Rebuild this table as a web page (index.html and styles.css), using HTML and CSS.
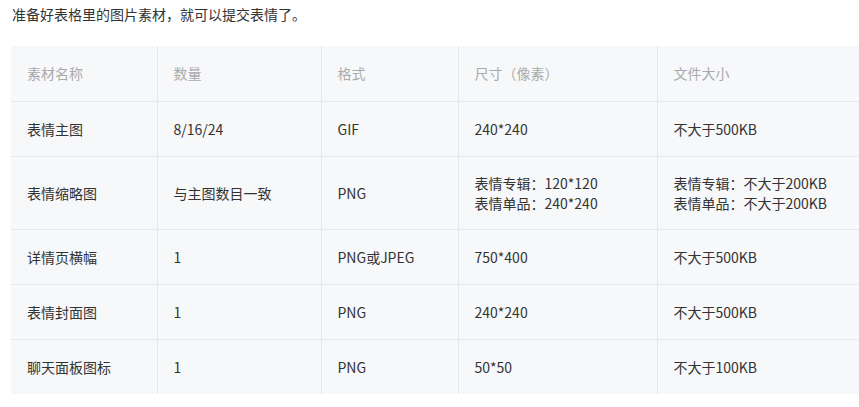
FILE: index.html
```html
<!DOCTYPE html>
<html lang="zh-CN">
<head>
<meta charset="utf-8">
<link rel="stylesheet" href="styles.css">
</head>
<body>
<p class="intro">准备好表格里的图片素材，就可以提交表情了。</p>
<div class="wrap">
<table class="spec">
  <colgroup>
    <col class="c1"><col class="c2"><col class="c3"><col class="c4"><col class="c5">
  </colgroup>
  <thead>
    <tr class="row-h"><th>素材名称</th><th>数量</th><th>格式</th><th>尺寸（像素）</th><th>文件大小</th></tr>
  </thead>
  <tbody>
    <tr class="row"><td>表情主图</td><td>8/16/24</td><td>GIF</td><td>240*240</td><td>不大于500KB</td></tr>
    <tr class="row-tall"><td>表情缩略图</td><td>与主图数目一致</td><td>PNG</td><td>表情专辑：120*120<br>表情单品：240*240</td><td>表情专辑：不大于200KB<br>表情单品：不大于200KB</td></tr>
    <tr class="row"><td>详情页横幅</td><td>1</td><td>PNG或JPEG</td><td>750*400</td><td>不大于500KB</td></tr>
    <tr class="row"><td>表情封面图</td><td>1</td><td>PNG</td><td>240*240</td><td>不大于500KB</td></tr>
    <tr class="row"><td>聊天面板图标</td><td>1</td><td>PNG</td><td>50*50</td><td>不大于100KB</td></tr>
  </tbody>
</table>
</div>
</body>
</html>
```
FILE: styles.css
```css
html, body {
  margin: 0;
  padding: 0;
  background: #fff;
  overflow: hidden;
}
body {
  font-family: "Noto Sans CJK SC", "Noto Sans", sans-serif;
  font-size: 14px;
  color: #333;
}
.intro {
  margin: 0;
  padding: 4px 0 0 12px;
  height: 46px;
  box-sizing: border-box;
  line-height: 20px;
  color: #333;
}
.wrap {
  padding-left: 11px;
  width: 870px;
}
.spec {
  border-collapse: collapse;
  table-layout: fixed;
  width: 860px;
  background: #f7f8fa;
}
.c1 { width: 146px; }
.c2 { width: 164px; }
.c3 { width: 137px; }
.c4 { width: 199px; }
.c5 { width: 214px; }
.spec th, .spec td {
  padding: 0 16px;
  text-align: left;
  vertical-align: middle;
  line-height: 20px;
  border-left: 1px solid #e6e7eb;
  border-top: 1px solid #e6e7eb;
  font-weight: normal;
}
.spec th:first-child, .spec td:first-child { border-left: none; }
.spec thead th { border-top: none; color: #aaa; }
.row-h { height: 55px; }
.row { height: 55px; }
.row-tall { height: 73px; }
.spec td { color: #333; }
```
